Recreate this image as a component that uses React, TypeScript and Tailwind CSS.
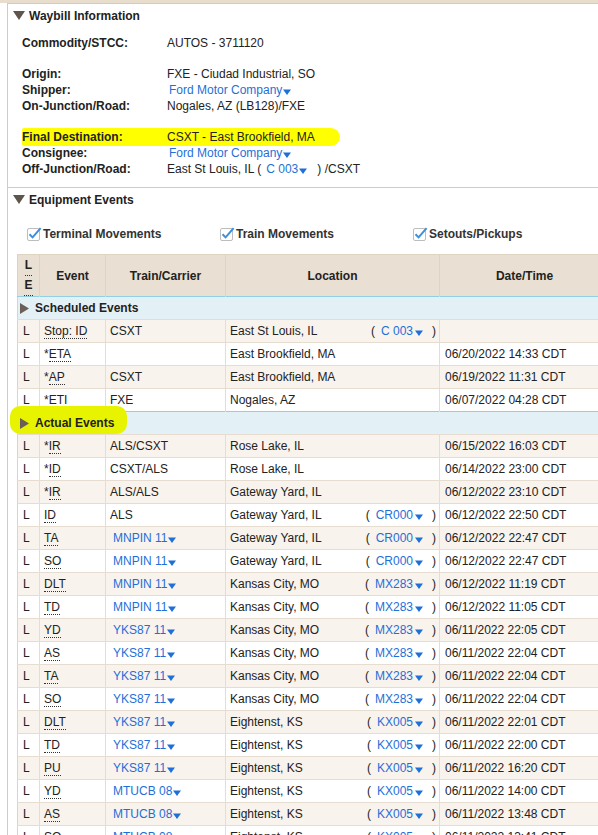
import React from 'react';

type EventRow = {
  star?: boolean;
  code: string;
  carrier: string;
  carrierLink?: boolean;
  location: string;
  station?: string;
  dateTime: string;
};

const scheduledEvents: EventRow[] = [
  { code: 'Stop: ID', carrier: 'CSXT', location: 'East St Louis, IL', station: 'C 003', dateTime: '' },
  { star: true, code: 'ETA', carrier: '', location: 'East Brookfield, MA', dateTime: '06/20/2022 14:33 CDT' },
  { star: true, code: 'AP', carrier: 'CSXT', location: 'East Brookfield, MA', dateTime: '06/19/2022 11:31 CDT' },
  { star: true, code: 'ETI', carrier: 'FXE', location: 'Nogales, AZ', dateTime: '06/07/2022 04:28 CDT' },
];

const actualEvents: EventRow[] = [
  { star: true, code: 'IR', carrier: 'ALS/CSXT', location: 'Rose Lake, IL', dateTime: '06/15/2022 16:03 CDT' },
  { star: true, code: 'ID', carrier: 'CSXT/ALS', location: 'Rose Lake, IL', dateTime: '06/14/2022 23:00 CDT' },
  { star: true, code: 'IR', carrier: 'ALS/ALS', location: 'Gateway Yard, IL', dateTime: '06/12/2022 23:10 CDT' },
  { code: 'ID', carrier: 'ALS', location: 'Gateway Yard, IL', station: 'CR000', dateTime: '06/12/2022 22:50 CDT' },
  { code: 'TA', carrier: 'MNPIN 11', carrierLink: true, location: 'Gateway Yard, IL', station: 'CR000', dateTime: '06/12/2022 22:47 CDT' },
  { code: 'SO', carrier: 'MNPIN 11', carrierLink: true, location: 'Gateway Yard, IL', station: 'CR000', dateTime: '06/12/2022 22:47 CDT' },
  { code: 'DLT', carrier: 'MNPIN 11', carrierLink: true, location: 'Kansas City, MO', station: 'MX283', dateTime: '06/12/2022 11:19 CDT' },
  { code: 'TD', carrier: 'MNPIN 11', carrierLink: true, location: 'Kansas City, MO', station: 'MX283', dateTime: '06/12/2022 11:05 CDT' },
  { code: 'YD', carrier: 'YKS87 11', carrierLink: true, location: 'Kansas City, MO', station: 'MX283', dateTime: '06/11/2022 22:05 CDT' },
  { code: 'AS', carrier: 'YKS87 11', carrierLink: true, location: 'Kansas City, MO', station: 'MX283', dateTime: '06/11/2022 22:04 CDT' },
  { code: 'TA', carrier: 'YKS87 11', carrierLink: true, location: 'Kansas City, MO', station: 'MX283', dateTime: '06/11/2022 22:04 CDT' },
  { code: 'SO', carrier: 'YKS87 11', carrierLink: true, location: 'Kansas City, MO', station: 'MX283', dateTime: '06/11/2022 22:04 CDT' },
  { code: 'DLT', carrier: 'YKS87 11', carrierLink: true, location: 'Eightenst, KS', station: 'KX005', dateTime: '06/11/2022 22:01 CDT' },
  { code: 'TD', carrier: 'YKS87 11', carrierLink: true, location: 'Eightenst, KS', station: 'KX005', dateTime: '06/11/2022 22:00 CDT' },
  { code: 'PU', carrier: 'YKS87 11', carrierLink: true, location: 'Eightenst, KS', station: 'KX005', dateTime: '06/11/2022 16:20 CDT' },
  { code: 'YD', carrier: 'MTUCB 08', carrierLink: true, location: 'Eightenst, KS', station: 'KX005', dateTime: '06/11/2022 14:00 CDT' },
  { code: 'AS', carrier: 'MTUCB 08', carrierLink: true, location: 'Eightenst, KS', station: 'KX005', dateTime: '06/11/2022 13:48 CDT' },
  { code: 'SO', carrier: 'MTUCB 08', carrierLink: true, location: 'Eightenst, KS', station: 'KX005', dateTime: '06/11/2022 13:41 CDT' },
];

// small blue dropdown arrow used after links
const Caret = ({ className = '' }: { className?: string }) => (
  <svg width="8" height="6" viewBox="0 0 8 6" className={`inline-block ${className}`}>
    <path d="M0 0.5h8L4 6z" fill="#1f6fd8" />
  </svg>
);

const DownTriangle = () => (
  <svg width="12" height="9" viewBox="0 0 12 9">
    <path d="M0 0H12L6 9z" fill="#5e554c" />
  </svg>
);

const RightTriangle = () => (
  <svg width="9" height="11" viewBox="0 0 9 11">
    <path d="M0 0L9 5.5L0 11z" fill="#6a6058" />
  </svg>
);

const CheckBox = () => (
  <svg width="15" height="15" viewBox="0 0 15 15" className="-mt-[2px] mr-[1px]">
    <rect x="0.5" y="2.5" width="12" height="12" rx="1.5" fill="#fff" stroke="#bdbdbd" />
    <path d="M2.5 8.3L5.6 11.4L13.6 2.2" fill="none" stroke="#3d8fdc" strokeWidth="2" />
  </svg>
);

const LinkText = ({ children }: { children: React.ReactNode }) => (
  <span className="inline-flex items-center text-[#1f6fd8]">
    {children}
    <Caret className="ml-[1px] mt-[3px]" />
  </span>
);

const Field = ({ label, children }: { label: string; children: React.ReactNode }) => (
  <div className="flex h-[16px] items-center">
    <span className="w-[145px] font-bold">{label}</span>
    <span>{children}</span>
  </div>
);

const Dotted = ({ children }: { children: React.ReactNode }) => (
  <span className="border-b border-dotted border-[#333]">{children}</span>
);

const SectionHeader = ({ title }: { title: string }) => (
  <div className="flex h-[23px] items-center pl-[5px]">
    <DownTriangle />
    <span className="ml-[4px] font-bold">{title}</span>
  </div>
);

const GroupRow = ({ title, marked }: { title: string; marked?: boolean }) => (
  <tr className="h-[23px] border-t border-[#93cfe4] bg-[#e3f1f7]">
    <td colSpan={5} className="pl-[2px]">
      <div className="relative flex items-center">
        {marked && (
          <span className="absolute left-[-10px] top-[-8px] h-[28px] w-[117px] rounded-[10px] bg-[#e8f300]" />
        )}
        <span className="relative flex items-center font-bold">
          <RightTriangle />
          <span className="ml-[6px]">{title}</span>
        </span>
      </div>
    </td>
  </tr>
);

const DataRow = ({ row, shaded }: { row: EventRow; shaded: boolean }) => (
  <tr className={`h-[23px] border-t border-[#e6dccf] ${shaded ? 'bg-[#f8f3ed]' : 'bg-white'}`}>
    <td className="border-r border-[#e6dccf] pl-[5px]">L</td>
    <td className="border-r border-[#e6dccf] pl-[4px]">
      {row.star && '*'}
      <Dotted>{row.code}</Dotted>
    </td>
    <td className="border-r border-[#e6dccf] pl-[4px]">
      {row.carrierLink ? (
        <span className="pl-[3px]">
          <LinkText>{row.carrier}</LinkText>
        </span>
      ) : (
        row.carrier
      )}
    </td>
    <td className="border-r border-[#e6dccf] pl-[4px]">
      <div className="flex items-center justify-between">
        <span>{row.location}</span>
        {row.station && (
          <span className="flex items-center pr-[3px]">
            <span>(</span>
            <span className="ml-[6px] text-[#1f6fd8]">{row.station}</span>
            <Caret className="ml-[2px] mt-[3px]" />
            <span className="ml-[9px]">)</span>
          </span>
        )}
      </div>
    </td>
    <td className="pl-[5px]">{row.dateTime}</td>
  </tr>
);

export default function App() {
  return (
    <div className="h-[835px] w-[598px] overflow-hidden bg-white font-['Liberation_Sans',Arial,sans-serif] text-[12px] text-[#222]">
      <div className="h-[3px] bg-[#e9dece]" />
      <div className="ml-[7px] w-[640px] border-l border-t border-[#d9cab7]">
        {/* Waybill */}
        <section className="border-b border-[#d9cab7] pb-[10px]">
          <SectionHeader title="Waybill Information" />
          <div className="pl-[14px] pt-[8px]">
            <Field label="Commodity/STCC:">AUTOS - 3711120</Field>
            <div className="h-[15px]" />
            <Field label="Origin:">FXE - Ciudad Industrial, SO</Field>
            <Field label="Shipper:">
              <span className="pl-[2px]">
                <LinkText>Ford Motor Company</LinkText>
              </span>
            </Field>
            <Field label="On-Junction/Road:">Nogales, AZ (LB128)/FXE</Field>
            <div className="h-[15px]" />
            <div className="-my-[1px] flex h-[18px] w-[318px] items-center rounded-l-[2px] rounded-r-[9px] bg-[#ffff00]">
              <span className="w-[145px] font-bold">Final Destination:</span>
              <span>CSXT - East Brookfield, MA</span>
            </div>
            <Field label="Consignee:">
              <span className="pl-[2px]">
                <LinkText>Ford Motor Company</LinkText>
              </span>
            </Field>
            <Field label="Off-Junction/Road:">
              <span className="flex items-center">
                East St Louis, IL (
                <span className="ml-[5px] text-[#1f6fd8]">C 003</span>
                <Caret className="ml-[1px] mt-[3px]" />
                <span className="ml-[10px]">) /CSXT</span>
              </span>
            </Field>
          </div>
        </section>

        {/* Equipment events */}
        <section>
          <SectionHeader title="Equipment Events" />
          <div className="mt-[14px] flex h-[18px] items-center pl-[19px] font-bold text-[#333]">
            <label className="flex w-[193px] items-center">
              <CheckBox />
              Terminal Movements
            </label>
            <label className="flex w-[193px] items-center">
              <CheckBox />
              Train Movements
            </label>
            <label className="flex items-center">
              <CheckBox />
              Setouts/Pickups
            </label>
          </div>

          <div className="mt-[11px] pl-[9px]">
            <table className="w-[592px] table-fixed border-collapse border border-[#e0d3c2]">
              <colgroup>
                <col className="w-[22px]" />
                <col className="w-[66px]" />
                <col className="w-[120px]" />
                <col className="w-[214px]" />
                <col className="w-[170px]" />
              </colgroup>
              <thead>
                <tr className="h-[41px] bg-[#e9dfd2] font-bold">
                  <th className="border-r border-[#e0d3c2] font-bold">
                    <div className="flex flex-col items-center pt-[1px] leading-[19px]">
                      <Dotted>L</Dotted>
                      <Dotted>E</Dotted>
                    </div>
                  </th>
                  <th className="border-r border-[#e0d3c2]">Event</th>
                  <th className="border-r border-[#e0d3c2]">Train/Carrier</th>
                  <th className="border-r border-[#e0d3c2]">Location</th>
                  <th>Date/Time</th>
                </tr>
              </thead>
              <tbody>
                <GroupRow title="Scheduled Events" />
                {scheduledEvents.map((row, i) => (
                  <DataRow key={`s${i}`} row={row} shaded={i % 2 === 0} />
                ))}
                <GroupRow title="Actual Events" marked />
                {actualEvents.map((row, i) => (
                  <DataRow key={`a${i}`} row={row} shaded={i % 2 === 0} />
                ))}
              </tbody>
            </table>
          </div>
        </section>
      </div>
    </div>
  );
}
